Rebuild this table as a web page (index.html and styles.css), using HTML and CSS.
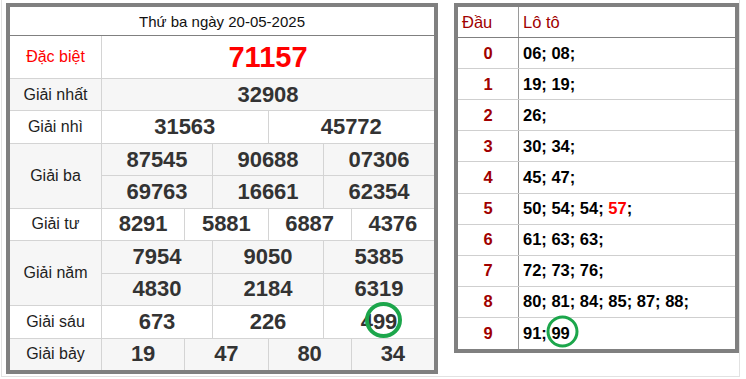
FILE: index.html
```html
<!DOCTYPE html>
<html lang="vi">
<head>
<meta charset="utf-8">
<title>Kết quả xổ số 20-05-2025</title>
<link rel="stylesheet" href="styles.css">
</head>
<body>
<div class="page">
  <div class="kq">
    <div class="kq-head">Thứ ba ngày 20-05-2025</div>
    <div class="kq-grid">
      <div class="lbl red-lbl">Đặc biệt</div>
      <div class="num db c12">71157</div>

      <div class="lbl alt">Giải nhất</div>
      <div class="num alt c12">32908</div>

      <div class="lbl">Giải nhì</div>
      <div class="num c6">31563</div>
      <div class="num c6">45772</div>

      <div class="lbl alt r2">Giải ba</div>
      <div class="num alt c4">87545</div>
      <div class="num alt c4">90688</div>
      <div class="num alt c4">07306</div>
      <div class="num alt c4">69763</div>
      <div class="num alt c4">16661</div>
      <div class="num alt c4">62354</div>

      <div class="lbl">Giải tư</div>
      <div class="num c3">8291</div>
      <div class="num c3">5881</div>
      <div class="num c3">6887</div>
      <div class="num c3">4376</div>

      <div class="lbl alt r2">Giải năm</div>
      <div class="num alt c4">7954</div>
      <div class="num alt c4">9050</div>
      <div class="num alt c4">5385</div>
      <div class="num alt c4">4830</div>
      <div class="num alt c4">2184</div>
      <div class="num alt c4">6319</div>

      <div class="lbl">Giải sáu</div>
      <div class="num c4">673</div>
      <div class="num c4">226</div>
      <div class="num c4">4<span class="mark mark-lg">99</span></div>

      <div class="lbl alt">Giải bảy</div>
      <div class="num alt c3">19</div>
      <div class="num alt c3">47</div>
      <div class="num alt c3">80</div>
      <div class="num alt c3">34</div>
    </div>
  </div>

  <div class="loto">
    <div class="lt-row lt-head">
      <div class="lt-dau">Đầu</div>
      <div class="lt-val">Lô tô</div>
    </div>
    <div class="lt-row"><div class="lt-dau">0</div><div class="lt-val">06; 08;</div></div>
    <div class="lt-row"><div class="lt-dau">1</div><div class="lt-val">19; 19;</div></div>
    <div class="lt-row"><div class="lt-dau">2</div><div class="lt-val">26;</div></div>
    <div class="lt-row"><div class="lt-dau">3</div><div class="lt-val">30; 34;</div></div>
    <div class="lt-row"><div class="lt-dau">4</div><div class="lt-val">45; 47;</div></div>
    <div class="lt-row"><div class="lt-dau">5</div><div class="lt-val">50; 54; 54; <span class="hot">57</span>;</div></div>
    <div class="lt-row"><div class="lt-dau">6</div><div class="lt-val">61; 63; 63;</div></div>
    <div class="lt-row"><div class="lt-dau">7</div><div class="lt-val">72; 73; 76;</div></div>
    <div class="lt-row"><div class="lt-dau">8</div><div class="lt-val">80; 81; 84; 85; 87; 88;</div></div>
    <div class="lt-row lt-last"><div class="lt-dau">9</div><div class="lt-val">91; <span class="mark mark-sm">99</span></div></div>
  </div>
</div>
</body>
</html>
```

FILE: styles.css
```css
html, body {
  margin: 0;
  padding: 0;
  background: #fff;
}

body {
  font-family: "Liberation Sans", Arial, sans-serif;
  color: #222;
}

.page {
  margin-left: 1px;
  width: 737px;
  height: 373px;
  padding: 3px 0 0 4px;
  box-sizing: content-box;
  border-left: 1px solid #e2e2e2;
  border-right: 1px solid #e2e2e2;
  border-bottom: 1px solid #e2e2e2;
  display: flex;
  align-items: flex-start;
  gap: 16px;
  width: 733px;
}

/* ---------- Left results table ---------- */
.kq {
  width: 432px;
  box-sizing: border-box;
  border: 4px solid #808080;
  background: #fff;
}

.kq-head {
  height: 28px;
  border-bottom: 1px solid #808080;
  display: flex;
  align-items: center;
  justify-content: center;
  font-size: 15px;
  color: #111;
}

.kq-grid {
  display: grid;
  grid-template-columns: 91px repeat(12, 1fr);
  grid-template-rows: 42px repeat(9, 1fr);
  gap: 1px;
  height: 334px;
  background: #d4d4d4;
}

.kq-grid > div {
  background: #fff;
  display: flex;
  align-items: center;
  justify-content: center;
}

.kq-grid > .alt {
  background: #f6f6f6;
}

.lbl {
  grid-column: 1;
  font-size: 16px;
  color: #1e1e1e;
}

.red-lbl {
  color: #f00;
}

.r2 {
  grid-row: span 2;
}

.num {
  font-size: 22px;
  font-weight: bold;
  color: #333;
}

.c12 { grid-column: span 12; }
.c6 { grid-column: span 6; }
.c4 { grid-column: span 4; }
.c3 { grid-column: span 3; }

.num.db {
  font-size: 29px;
  color: #f00;
}

/* ---------- Circled numbers ---------- */
.mark {
  position: relative;
  display: inline-block;
}

.mark::after {
  content: "";
  position: absolute;
  left: 50%;
  top: 50%;
  box-sizing: border-box;
  border-radius: 50%;
  border-style: solid;
  border-color: #1ca64b;
}

.mark-lg::after {
  width: 37px;
  height: 36px;
  border-width: 4px;
  transform: translate(calc(-50% - 1.5px), calc(-50% - 2px));
}

.mark-sm::after {
  width: 32px;
  height: 32px;
  border-width: 3.5px;
  transform: translate(calc(-50% + 1.5px), calc(-50% - 1.5px));
}

/* ---------- Right loto table ---------- */
.loto {
  width: 285px;
  height: 350px;
  box-sizing: border-box;
  border: 4px solid #808080;
  display: grid;
  grid-template-rows: 31px repeat(10, 1fr);
  background: #fff;
}

.lt-row {
  display: grid;
  grid-template-columns: 61px 1fr;
  border-bottom: 1px solid #cfcfcf;
}

.lt-row.lt-head {
  border-bottom-color: #808080;
}

.lt-row.lt-last {
  border-bottom: none;
}

.lt-dau {
  border-right: 1px solid #9a9a9a;
  display: flex;
  align-items: center;
  justify-content: center;
  font-weight: bold;
  font-size: 16.5px;
  color: #a00000;
}

.lt-val {
  display: flex;
  align-items: center;
  padding-left: 4px;
  font-weight: bold;
  font-size: 16.5px;
  color: #000;
  white-space: pre;
}

.lt-head .lt-dau {
  justify-content: flex-start;
  padding-left: 4px;
  font-weight: normal;
  color: #a00000;
}

.lt-head .lt-val {
  font-weight: normal;
  color: #a00000;
}

.hot {
  color: #f00;
}
```
